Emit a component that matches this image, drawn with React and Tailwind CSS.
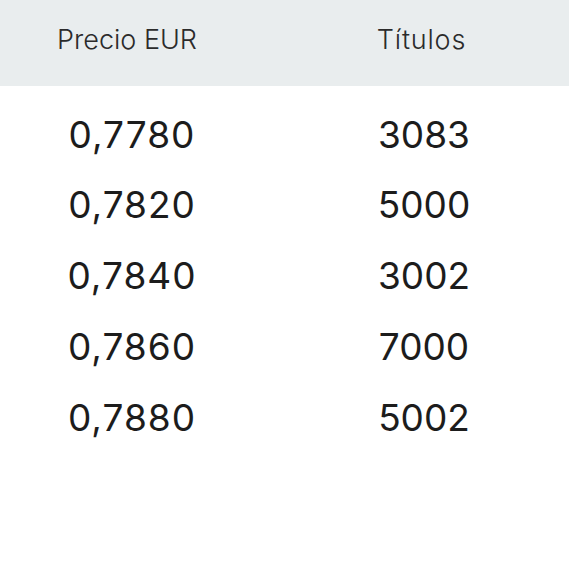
export default function App() {
  const rows = [
    ["0,7780", "3083"],
    ["0,7820", "5000"],
    ["0,7840", "3002"],
    ["0,7860", "7000"],
    ["0,7880", "5002"],
  ];
  return (
    <div className="w-[569px] h-[562px] bg-white" style={{ fontFamily: "Inter, 'Open Sans', sans-serif" }}>
      <div className="h-[86px] bg-[#e9edee] grid grid-cols-[258px_200px] gap-x-[65px] items-center pb-[6px]">
        <div className="text-center text-[27px] font-light text-[#2b2b2b] -ml-[4px]">Precio EUR</div>
        <div className="text-center text-[27px] font-light text-[#2b2b2b] -ml-[3px] tracking-[0.8px]">Títulos</div>
      </div>
      <div className="pt-[13px]">
        {rows.map(([p, t]) => (
          <div key={p} className="h-[70.75px] grid grid-cols-[258px_200px] gap-x-[65px] items-center">
            <div className="text-center text-[37px] tracking-[1px] text-[#1c1c1c] pl-[6px]">{p}</div>
            <div className="text-center text-[37px] text-[#1c1c1c] pl-[2px]">{t}</div>
          </div>
        ))}
      </div>
    </div>
  );
}
